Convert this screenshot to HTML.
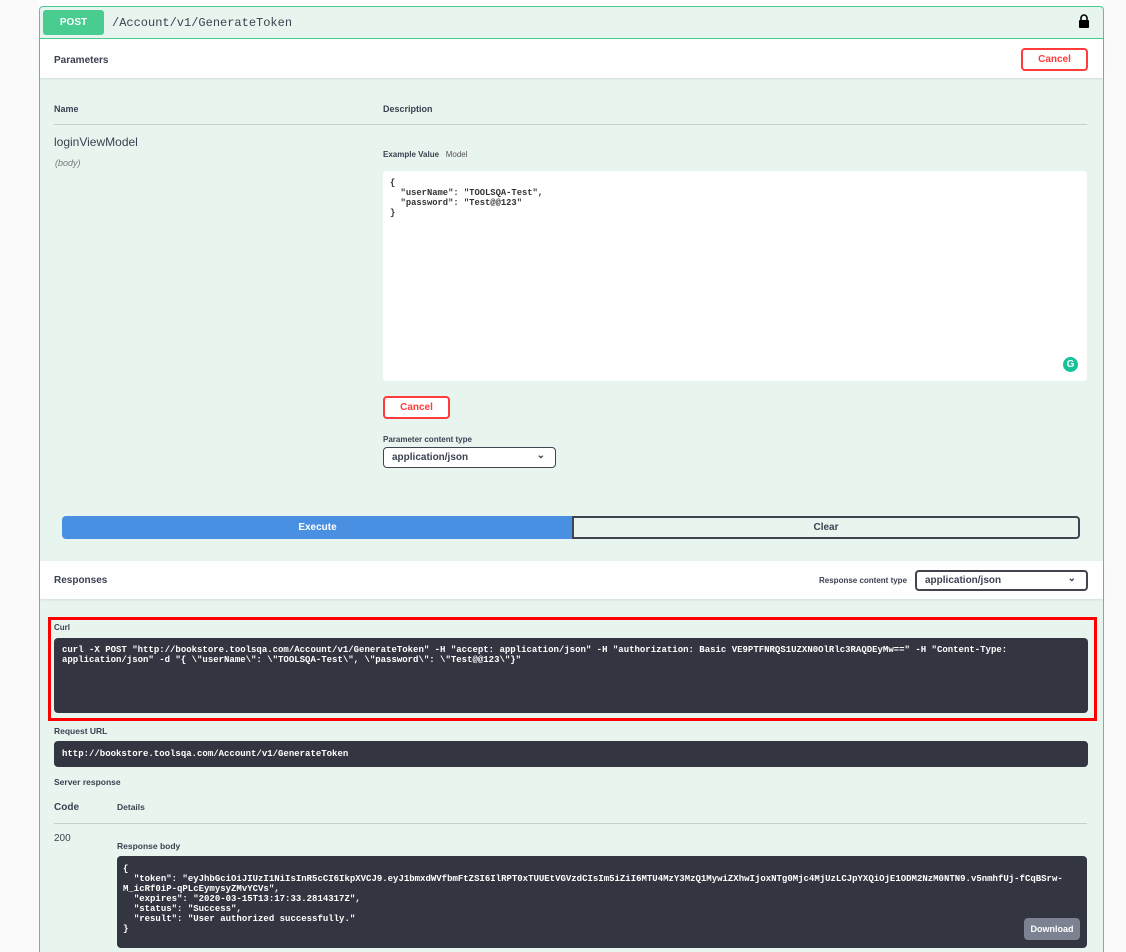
<!DOCTYPE html>
<html><head><meta charset="utf-8"><style>
*{box-sizing:border-box;margin:0;padding:0}
html,body{width:1126px;height:952px;overflow:hidden}
body{background:#fff;font-family:"Liberation Sans",sans-serif;color:#3b4151;position:relative}
.abs{position:absolute}
.box{left:39px;top:6px;width:1065px;height:946px;border:1px solid #49cc90;border-bottom:none;border-radius:4px 4px 0 0;background:#e8f5ef}
.b{font-weight:bold;font-size:10px;color:#3b4151}
.mono{font-family:"Liberation Mono",monospace}
.dark{background:#333640;border-radius:4px;color:#fff;font-family:"Liberation Mono",monospace;font-size:9px;font-weight:bold;line-height:10px}
.btn{border:2px solid #ff3b3b;border-radius:4px;color:#ff3b3b;font-weight:bold;font-size:10px;text-align:center;background:#fff}
.sel{border:1px solid #41444e;border-radius:4px;background:#fff;font-size:10px;font-weight:bold;padding-left:8px;line-height:19px}
</style></head><body>
<div class="abs" style="left:0;top:0;width:39px;height:952px;background:#fafafa"></div>
<div class="abs" style="left:1104px;top:0;width:22px;height:952px;background:#fafafa"></div>
<div class="abs box"></div>
<div class="abs" style="left:40px;top:38px;width:1063px;height:1px;background:#49cc90"></div>
<div class="abs" style="left:43px;top:10px;width:61px;height:25px;background:#49cc90;border-radius:3px;color:#fff;font-weight:bold;font-size:10px;text-align:center;line-height:25px">POST</div>
<div class="abs mono" style="left:112px;top:16px;font-size:12px;color:#3b4151">/Account/v1/GenerateToken</div>
<svg class="abs" style="left:1078px;top:14px" width="12" height="14" viewBox="0 0 12 14"><path d="M3 6V4a3 3 0 0 1 6 0v2" fill="none" stroke="#000" stroke-width="1.6"/><rect x="1" y="6" width="10" height="8" rx="1" fill="#000"/></svg>
<div class="abs" style="left:40px;top:39px;width:1063px;height:39px;background:#fdfefd;box-shadow:0 1px 2px rgba(0,0,0,.1)"></div>
<div class="abs b" style="left:54px;top:55px">Parameters</div>
<div class="abs btn" style="left:1021px;top:48px;width:67px;height:23px;line-height:19px">Cancel</div>
<div class="abs b" style="left:54px;top:104px;font-size:9px">Name</div>
<div class="abs b" style="left:383px;top:104px;font-size:9px">Description</div>
<div class="abs" style="left:54px;top:124px;width:1033px;height:1px;background:#c5d0ca"></div>
<div class="abs" style="left:54px;top:135px;font-size:12px">loginViewModel</div>
<div class="abs" style="left:55px;top:158px;font-size:9px;font-style:italic;color:#777">(body)</div>
<div class="abs" style="left:383px;top:150px;font-size:8px"><b>Example Value</b>&nbsp;&nbsp;&nbsp;<span style="color:#555">Model</span></div>
<div class="abs" style="left:383px;top:171px;width:704px;height:210px;background:#fff;border-radius:4px"></div>
<pre class="abs mono" style="left:390px;top:178px;font-size:8.8px;line-height:10px;color:#333;font-weight:bold">{
  "userName": "TOOLSQA-Test",
  "password": "Test@@123"
}</pre>
<div class="abs" style="left:1063px;top:357px;width:15px;height:15px;border-radius:50%;background:#15c39a;color:#fff;font-size:10px;font-weight:bold;text-align:center;line-height:15px">G</div>
<div class="abs btn" style="left:383px;top:396px;width:67px;height:23px;line-height:19px">Cancel</div>
<div class="abs b" style="left:383px;top:435px;font-size:8px">Parameter content type</div>
<div class="abs sel" style="left:383px;top:447px;width:173px;height:21px">application/json<span style="position:absolute;right:10px;top:-2px">⌄</span></div>
<div class="abs" style="left:62px;top:516px;width:511px;height:23px;background:#4990e2;border-radius:4px 0 0 4px;color:#fff;font-weight:bold;font-size:10px;text-align:center;line-height:23px">Execute</div>
<div class="abs" style="left:572px;top:516px;width:508px;height:23px;border:2px solid #41444e;border-radius:0 4px 4px 0;font-weight:bold;font-size:10px;text-align:center;line-height:19px">Clear</div>
<div class="abs" style="left:40px;top:561px;width:1063px;height:38px;background:#fdfefd;box-shadow:0 1px 2px rgba(0,0,0,.1)"></div>
<div class="abs b" style="left:54px;top:575px">Responses</div>
<div class="abs b" style="left:819px;top:576px;font-size:8px">Response content type</div>
<div class="abs sel" style="left:915px;top:570px;width:173px;height:21px;border-width:2px;line-height:17px">application/json<span style="position:absolute;right:10px;top:-2px">⌄</span></div>
<div class="abs" style="left:48px;top:617px;width:1049px;height:104px;border:3px solid #f00"></div>
<div class="abs b" style="left:54px;top:623px;font-size:8px">Curl</div>
<div class="abs dark" style="left:54px;top:638px;width:1034px;height:75px;padding:7px 8px">curl -X POST "http://bookstore.toolsqa.com/Account/v1/GenerateToken" -H "accept: application/json" -H "authorization: Basic VE9PTFNRQS1UZXN0OlRlc3RAQDEyMw==" -H "Content-Type: application/json" -d "{ \"userName\": \"TOOLSQA-Test\", \"password\": \"Test@@123\"}"</div>
<div class="abs b" style="left:54px;top:726px;font-size:8.5px">Request URL</div>
<div class="abs dark" style="left:54px;top:741px;width:1034px;height:26px;padding:8px 8px">http://bookstore.toolsqa.com/Account/v1/GenerateToken</div>
<div class="abs b" style="left:54px;top:777px;font-size:8.5px">Server response</div>
<div class="abs b" style="left:54px;top:802px">Code</div>
<div class="abs b" style="left:117px;top:802px;font-size:8.5px">Details</div>
<div class="abs" style="left:54px;top:823px;width:1033px;height:1px;background:#c5d0ca"></div>
<div class="abs" style="left:54px;top:833px;font-size:10px">200</div>
<div class="abs b" style="left:117px;top:841px;font-size:8.5px">Response body</div>
<div class="abs dark" style="left:117px;top:856px;width:970px;height:92px;padding:8px 6px;white-space:pre-wrap">{
  "token": "eyJhbGciOiJIUzI1NiIsInR5cCI6IkpXVCJ9.eyJ1bmxdWVfbmFtZSI6IlRPT0xTUUEtVGVzdCIsIm5iZiI6MTU4MzY3MzQ1MywiZXhwIjoxNTg0Mjc4MjUzLCJpYXQiOjE1ODM2NzM0NTN9.v5nmhfUj-fCqBSrw-M_icRf0iP-qPLcEymysyZMvYCVs",
  "expires": "2020-03-15T13:17:33.2814317Z",
  "status": "Success",
  "result": "User authorized successfully."
}</div>
<div class="abs" style="left:1024px;top:918px;width:56px;height:22px;background:#7d8293;border-radius:4px;color:#fff;font-weight:bold;font-size:9px;text-align:center;line-height:22px">Download</div>
</body></html>
